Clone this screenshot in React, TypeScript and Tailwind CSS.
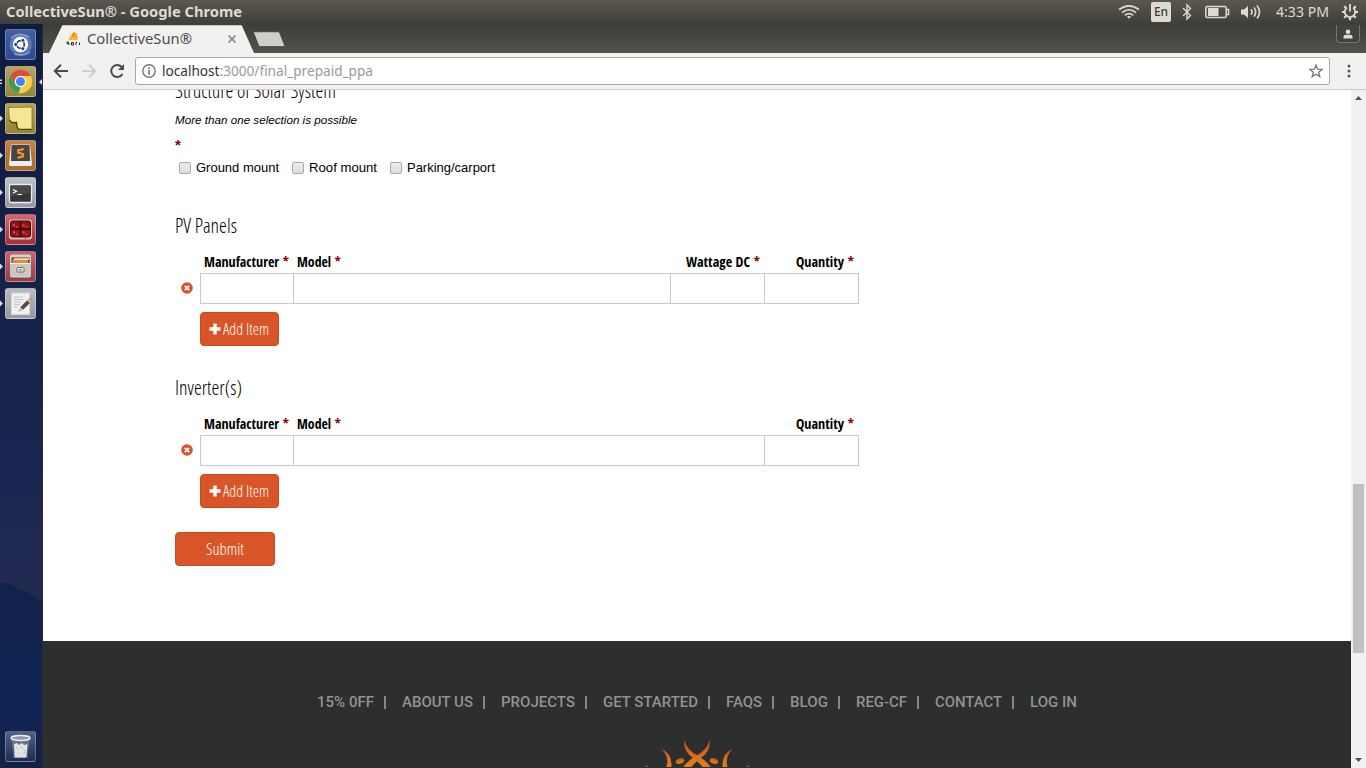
import { useLayoutEffect, useRef, useState, type ReactNode } from "react";

/* Text squeezed or stretched so that it fills the width of its own box. */
function Fit({ className, children }: { className: string; children: ReactNode }) {
  const box = useRef<HTMLSpanElement>(null);
  const inner = useRef<HTMLSpanElement>(null);
  const [k, setK] = useState(1);
  useLayoutEffect(() => {
    if (box.current && inner.current && inner.current.offsetWidth) {
      const range = document.createRange();
      range.selectNodeContents(inner.current);
      setK((prev) => (box.current!.clientWidth / range.getBoundingClientRect().width) * prev);
    }
  }, []);
  return (
    <span ref={box} className={"block shrink-0 whitespace-nowrap " + className}>
      <span ref={inner} className="inline-block origin-left" style={{ transform: `scaleX(${k})` }}>
        {children}
      </span>
    </span>
  );
}

const ui = "font-['Noto_Sans',sans-serif]";
const cond = "font-['Open_Sans_Condensed','Open_Sans',sans-serif] [font-stretch:75%]";
const condLight = "font-['Open_Sans_Condensed_Light','Open_Sans_Light','Open_Sans',sans-serif] font-light";

function Tray() {
  const c = "#dfdbd2";
  return (
    <div className="flex h-6 items-center">
      <svg width="22" height="16" viewBox="0 0 22 16" fill="none" stroke={c} strokeWidth="1.6">
        <path d="M1 5.7Q11-2 21 5.7M4 8.6Q11 3 18 8.6M6.8 11.4Q11 8 15.2 11.4" />
        <path d="M8.8 12.6Q11 11.2 13.2 12.6L11 14.8Z" fill={c} stroke="none" />
      </svg>
      <span className={`ml-[11px] flex h-5 w-5 items-center justify-center rounded-[2px] bg-[#dfdbd2] text-[12px] font-medium text-[#3c3b37] ${ui}`}>En</span>
      <svg className="ml-[11px]" width="10" height="18" viewBox="0 0 10 18" fill="none" stroke={c} strokeWidth="1.4">
        <path d="M1 5L8.5 12.5L5 16V2L8.5 5.5L1 13" />
      </svg>
      <svg className="ml-[13px]" width="25" height="14" viewBox="0 0 25 14" fill="none" stroke={c} strokeWidth="1.5">
        <rect x=".8" y="1.5" width="20.4" height="11" rx="1.5" />
        <path d="M22 4.5H23.6V9.5H22" />
        <rect x="3" y="3" width="10.500" height="8" fill={c} stroke="none" />
      </svg>
      <svg className="ml-[11px]" width="21" height="16" viewBox="0 0 21 16" fill="none" stroke={c} strokeWidth="1.6">
        <path d="M0 5.5H3L7 2V14L3 10.5H0Z" fill={c} stroke="none" />
        <path d="M10 5.3Q12 8 10 10.7M13 3.4Q16.3 8 13 12.6M16 1.4Q21 8 16 14.6" />
      </svg>
      <Fit className={`ml-[14px] w-[53px] text-[14px] leading-6 text-[#dfdbd2] ${ui}`}>4:33 PM</Fit>
      <svg className="ml-[12px] mr-[7px]" width="18" height="18" viewBox="0 0 18 18" fill="none" stroke={c}>
        <path d="M5.8 4.8A5.2 5.2 0 1 0 12.2 4.8" strokeWidth="1.8" />
        <path d="M9 1V8.5" strokeWidth="1.8" />
        <path d="M1 9H4M14 9H17M9 14V17.3M3.2 3.2L5.3 5.3M14.8 3.2L12.7 5.3M3.2 14.8L5.3 12.7M14.8 14.8L12.7 12.7" strokeWidth="2.2" />
      </svg>
    </div>
  );
}

function Tile({ className, mark, active, children }: { className: string; mark?: number; active?: boolean; children: ReactNode }) {
  return (
    <div className="flex h-[31px] w-[43px] shrink-0 items-center">
      <svg width="5" height="13" viewBox="0 0 5 13" fill="#d8dbe4">
        {mark === 1 && <path d="M0 3.5L3 6.5L0 9.5Z" />}
        {mark === 2 && <path d="M0 4.5h2v1.5h-2zM0 7.5h2v1.5h-2z" />}
      </svg>
      <div className={"h-[31px] w-[31px] overflow-hidden rounded-[3px] border border-white/25 " + className}>
        <svg width="29" height="29" viewBox="0 0 29 29">{children}</svg>
      </div>
      {active && (
        <svg className="ml-[3px]" width="3" height="6" viewBox="0 0 3 6" fill="#e4e4ea"><path d="M3 0V6L0 3Z" /></svg>
      )}
    </div>
  );
}

function Launcher() {
  return (
    <aside className="relative flex h-[744px] w-[43px] shrink-0 flex-col justify-between overflow-hidden border-r border-[#2b2936] bg-[linear-gradient(#0d1c40_0%,#142149_35%,#182550_60%,#222a52_74%,#24294e_80%)]">
      <svg className="absolute left-0 top-[555px]" width="43" height="189" viewBox="0 0 43 189">
        <defs>
          <linearGradient id="hill" x1="0" y1="0" x2="0" y2="1">
            <stop offset="0" stopColor="#11224b" />
            <stop offset=".75" stopColor="#102353" />
            <stop offset="1" stopColor="#172044" />
          </linearGradient>
        </defs>
        <path d="M0 3Q10 4 17 9Q32 14 43 24V189H0Z" fill="url(#hill)" />
      </svg>
      <div className="relative flex flex-col gap-[6px] pt-[5px]">
        <Tile className="bg-gradient-to-b from-[#4360a0] to-[#2b4896]">
          <path d="M4 18C2 7 11 2 20 5C26 8 28 16 23 22C17 28 8 26 4 18Z" fill="#8197c4" opacity=".55" />
          <path d="M5 8Q13 1 23 7M24 22Q18 27 8 24" stroke="#b3c0dc" strokeWidth="1.5" fill="none" opacity=".6" />
          <circle cx="14.5" cy="14.5" r="7.7" fill="#fff" />
          <circle cx="14.5" cy="14.5" r="3.8" fill="none" stroke="#25386f" strokeWidth="1.7" />
          <g fill="#25386f" stroke="#fff" strokeWidth=".8">
            <circle cx="9.7" cy="14.5" r="1.9" />
            <circle cx="16.9" cy="10.3" r="1.9" />
            <circle cx="16.9" cy="18.7" r="1.9" />
          </g>
        </Tile>
        <Tile className="bg-gradient-to-b from-[#b3a368] to-[#96873e]" mark={2} active>
          <circle cx="14.5" cy="14.5" r="11.7" fill="#f8cc46" />
          <path d="M4.4 8.6A11.7 11.7 0 0 1 24.7 8.9H14.5L9.4 17.3Z" fill="#df4b3b" />
          <path d="M4.4 8.6L9.4 17.4L14.5 20.2L12.6 26A11.7 11.7 0 0 1 4.4 8.6Z" fill="#3c9b57" />
          <circle cx="14.5" cy="14.5" r="5.8" fill="#f5f5f5" />
          <circle cx="14.5" cy="14.5" r="4.5" fill="#4583f0" />
        </Tile>
        <Tile className="bg-gradient-to-b from-[#b5a558] to-[#968535]" mark={1}>
          <path d="M2.500 3.500L26 3V25.500H13Q10.500 24 10.500 19.500Q5 20.500 3.500 16Z" fill="#f4e693" stroke="#7b6f2a" strokeWidth=".8" />
          <path d="M3.500 16Q5 19.500 10.500 18.500Q10.500 24 13 25.300H26" fill="none" stroke="#4b430f" strokeWidth="1.3" />
        </Tile>
        <Tile className="bg-gradient-to-b from-[#c18349] to-[#a96930]" mark={1}>
          <path d="M5 3.500H24L26 23.500Q26 25 24.500 25H4.500Q3 25 3 23.500Z" fill="#eeeeec" />
          <path d="M5.5 4H23.5L24 20H5Z" fill="#444546" />
          <path d="M17.800 8L12.200 9.500V11.600L17 13V15.300L11.500 16.800" fill="none" stroke="#f39429" strokeWidth="2.300" />
        </Tile>
        <Tile className="bg-gradient-to-b from-[#c0c1c5] to-[#96989e]" mark={1}>
          <rect x="3.5" y="6.5" width="22" height="18" rx="1.5" fill="#343636" stroke="#eeeeec" strokeWidth="1.3" />
          <path d="M5 8H24V15L5 18Z" fill="#606362" opacity=".45" />
          <path d="M7 11.5L10.5 13.2L7 15" fill="none" stroke="#fff" strokeWidth="1.2" />
          <path d="M11.5 16.5H16" stroke="#fff" />
        </Tile>
        <Tile className="bg-gradient-to-b from-[#d06a70] to-[#a92b32]" mark={1}>
          <rect x="3" y="4.5" width="23" height="20" rx="3" fill="#cac9c5" />
          <rect x="4.5" y="6" width="20" height="16" rx="2" fill="#9b1014" stroke="#3d0809" />
          <path d="M14.5 6.5V21.5M5 14H24" stroke="#2b0808" strokeWidth="1.3" />
          <path d="M7 9.5L9 10.3L7 11M16.5 9.5L18.5 10.3L16.5 11M7 16.5L9 17.3L7 18M16.5 16.5L18.5 17.3L16.5 18M10 12H12M19.5 12H21.5M10 19H12M19.5 19H21.5" fill="none" stroke="#ee7777" strokeWidth=".8" />
          <circle cx="19.5" cy="23.5" r=".8" fill="#ee3030" />
        </Tile>
        <Tile className="bg-gradient-to-b from-[#c4666e] to-[#933f48]" mark={1}>
          <rect x="4" y="2.5" width="21" height="23" rx="2" fill="#d5d3cf" />
          <path d="M5.5 5.5H23.5V11H5.5Z" fill="#5b3a27" />
          <path d="M6.5 7H22V11H6.5Z" fill="#ef8a3a" />
          <path d="M8 6.3H23V8H8Z" fill="#ffe0bd" />
          <path d="M4 11H25V24H4Z" fill="#c8c7c4" />
          <path d="M4 11.5H25" stroke="#f6f6f5" />
          <rect x="11" y="15.5" width="7" height="4.5" rx=".8" fill="#f5f5f4" stroke="#666" />
          <path d="M12.8 17.8H16.2" stroke="#555" />
        </Tile>
        <Tile className="bg-gradient-to-b from-[#b9bac0] to-[#9799a2]" mark={1}>
          <rect x="5.5" y="4" width="18" height="21.5" fill="#f0f0ef" stroke="#d6d6d6" />
          <path d="M8 8H17M8 10.5H18M8 13H15M8 15.5H14M8 18H12" stroke="#bcbcbc" strokeWidth=".9" />
          <path d="M12.5 22.5L14.5 18L22 10.5L24.7 13.2L17 20.8Z" fill="#4c4c4a" />
          <path d="M21 11.5L23.6 14.1L25 12.6L22.5 10Z" fill="#d9cf4e" />
          <path d="M22.5 10L24 8.7Q25.5 8 26.5 9.5Q27 10.5 26 11.5L25 12.6Z" fill="#c78ab8" />
          <path d="M12.5 22.5L14.5 18L17 20.8Z" fill="#e4c893" />
        </Tile>
      </div>
      <div className="relative pb-[6px]">
        <Tile className="bg-gradient-to-b from-[#6f7d9d]/70 to-[#1f3059]/80">
          <path d="M5.5 6.5H23.5L21.5 26H7.5Z" fill="#98a1b3" opacity=".45" />
          <path d="M8 12L11 11L13 13L16 11L18 13L21.5 12L20.3 25.5H8.7Z" fill="#e3e4e0" />
          <path d="M10 15L13 18M15 14L17 17M13 20L11 22M19 18L18 22" fill="none" stroke="#b9bab8" strokeWidth=".8" />
          <ellipse cx="14.5" cy="6" rx="9.5" ry="2.5" fill="#8e97a8" stroke="#eceeed" strokeWidth="1.4" />
        </Tile>
      </div>
    </aside>
  );
}

function TabStrip() {
  return (
    <div className="flex h-[29px] justify-between bg-gradient-to-b from-[#3d3c38] to-[#53524b]">
      <div className="flex">
        <div className="ml-[6px] flex h-[29px] w-[205px] items-center bg-[#f2f1f0] pl-[17px] [clip-path:polygon(6.5%_4%,94%_4%,100%_100%,0_100%)]">
          <svg width="15" height="15" viewBox="0 0 15 15">
            <path d="M8 0L9 2L11 2V4L12 6L11 8L12 9H3L1.500 9.500L4 7L3 6L5 5L4 3L6 4Z" fill="#f5b324" />
            <path d="M6 4L8 1L8.500 4L10 6L8.500 8L7 6L5 8L6 6Z" fill="#e57c20" />
            <path d="M7.500 4.500L9 7.500M5.500 6L7 8.500" stroke="#fbe87a" fill="none" />
            <path d="M3 11H1V12.5H3V14M5.500 11.500V14H7.500V11.500H5.500M10 14V11.500H11M13.500 11.500V14" fill="none" stroke="#111" strokeWidth=".9" />
          </svg>
          <Fit className={`ml-[6px] w-[105px] text-[14px] leading-6 text-[#4c4c4c] ${ui}`}>CollectiveSun®</Fit>
          <svg className="ml-[36px]" width="8" height="8" viewBox="0 0 8 8" stroke="#888" strokeWidth="1.6"><path d="M.5 .5L7.5 7.5M7.5 .5L.5 7.5" /></svg>
        </div>
        <svg className="-ml-[2px] mt-[7px]" width="34" height="17" viewBox="0 0 34 17">
          <path d="M1.500 1.5Q.500 .8 2 .8H25.5Q27 .8 27.8 2L33 15.6H8.5Q7.2 15.6 6.6 14.5Z" fill="#cfcecb" stroke="#393834" strokeWidth=".7" />
        </svg>
      </div>
      <div className="mr-[6px] mt-[1px] flex h-[18px] w-[24px] items-center justify-center rounded-b-[4px] border border-t-0 border-[#77766f] bg-[#42413c]">
        <svg width="10" height="10" viewBox="0 0 10 10" fill="#dedcd7"><circle cx="5" cy="2.7" r="2.3" /><path d="M.5 9.5V7.8Q.5 5.8 3 5.8H7Q9.5 5.8 9.5 7.8V9.5Z" /></svg>
      </div>
    </div>
  );
}

function Toolbar() {
  return (
    <div className="flex h-[37px] items-center border-b border-[#cdcbc9] bg-[#f2f1f0] pl-[10px]">
      <svg width="16" height="16" viewBox="0 0 16 16" fill="none" stroke="#4a4a4a" strokeWidth="2"><path d="M15 8H2M8 1.8L1.8 8L8 14.2" /></svg>
      <svg className="ml-[12px]" width="16" height="16" viewBox="0 0 16 16" fill="none" stroke="#cfcdcb" strokeWidth="2"><path d="M1 8H14M8 1.8L14.2 8L8 14.2" /></svg>
      <svg className="ml-[12px]" width="16" height="16" viewBox="0 0 16 16" fill="none" stroke="#4a4a4a" strokeWidth="2">
        <path d="M13.4 11A6 6 0 1 1 12.5 3.8L13.5 5" /><path d="M15 1V7H9Z" fill="#4a4a4a" stroke="none" />
      </svg>
      <div className="ml-[10px] flex h-7 w-[1195px] items-center rounded-[3px] border border-[#aaa8a6] bg-white">
        <svg className="ml-[6px]" width="14" height="14" viewBox="0 0 14 14" fill="none" stroke="#777" strokeWidth="1.4"><circle cx="7" cy="7" r="6.2" /><path d="M7 6V10.7M7 3.3V4.9" strokeWidth="1.7" /></svg>
        <Fit className={`ml-[6px] w-[211px] text-[14px] leading-6 text-[#9a9a9a] ${ui}`}><span className="text-[#333]">localhost</span>:3000/final_prepaid_ppa</Fit>
        <svg className="ml-auto mr-[6px]" width="14" height="14" viewBox="0 0 14 14" fill="none" stroke="#777" strokeWidth="1.3"><path d="M7 1.2L8.6 5.1L13 5.4L9.6 8.2L10.8 12.6L7 10.2L3.2 12.6L4.4 8.2L1 5.4L5.4 5.1Z" /></svg>
      </div>
      <svg className="ml-[17px]" width="4" height="14" viewBox="0 0 4 14" fill="#555"><circle cx="2" cy="2" r="1.5" /><circle cx="2" cy="7" r="1.5" /><circle cx="2" cy="12" r="1.5" /></svg>
    </div>
  );
}

function Heading({ className, children }: { className: string; children: ReactNode }) {
  return <h2><Fit className={`h-6 text-[20px] leading-[26px] text-black ${condLight} ${className}`}>{children}</Fit></h2>;
}

function Check({ label, className }: { label: string; className: string }) {
  return (
    <label className="flex items-center">
      <span className="h-3 w-3 rounded-[2px] border border-[#a9a9a9] bg-gradient-to-b from-[#ededed] to-[#dcdcdc]" />
      <Fit className={`ml-[5px] text-[13px] leading-4 text-black ${className}`}>{label}</Fit>
    </label>
  );
}

function Col({ name, className }: { name: string; className: string }) {
  return (
    <Fit className={`text-[14px] font-bold leading-5 text-black ${cond} ${className}`}>
      {name} <span className="text-[#8b0000]">*</span>
    </Fit>
  );
}

function ItemRow({ cells }: { cells: string[] }) {
  return (
    <div className="flex h-[31px] items-center pl-[6px]">
      <svg className="mb-px mr-[7px] shrink-0" width="12" height="12" viewBox="0 0 12 12">
        <circle cx="6" cy="6" r="5.8" fill="#d85427" />
        <path d="M3.9 3.9L8.1 8.1M8.1 3.9L3.9 8.1" stroke="#fff" strokeWidth="2" />
      </svg>
      <div className="flex h-[31px] border-y border-r border-[#c9c9c9]">
        {cells.map((w, i) => <div key={i} className={"border-l border-[#c9c9c9] bg-white " + w} />)}
      </div>
    </div>
  );
}

const btn = "flex h-[34px] items-center rounded-[4px] border border-[#c54b22] bg-[#d95427]";

function AddItem() {
  return (
    <button className={`ml-[25px] mt-2 w-[79px] pb-px pl-2 ${btn}`}>
      <svg width="12" height="12" viewBox="0 0 12 12" fill="#fff"><path d="M4.3 .5H7.7V4.3H11.5V7.7H7.7V11.5H4.3V7.7H.5V4.3H4.3Z" /></svg>
      <Fit className={`ml-[2px] w-[46px] text-left text-[16px] leading-6 text-white ${condLight}`}>Add Item</Fit>
    </button>
  );
}

const links: [string, string][] = [
  ["15% 0FF", "w-[57px]"], ["ABOUT US", "w-[71px]"], ["PROJECTS", "w-[74px]"], ["GET STARTED", "w-[95px]"],
  ["FAQS", "w-[36px]"], ["BLOG", "w-[38px]"], ["REG-CF", "w-[51px]"], ["CONTACT", "w-[67px]"], ["LOG IN", "w-[47px]"],
];

function Footer() {
  return (
    <footer className="h-[127px] overflow-hidden bg-[#2d2e2e] pl-[274px] pt-[51px]">
      <nav className="flex h-5 font-['Roboto',sans-serif] text-[15px] font-medium leading-5 text-[#929292]">
        {links.map(([t, w], i) => (
          <div key={t} className="flex items-center">
            <Fit className={w}>{t}</Fit>
            {i < links.length - 1 && <span className="ml-[10px] mr-[16px] h-[13px] w-[2px] bg-[#868686]" />}
          </div>
        ))}
      </nav>
      <svg className="ml-[327px] mt-[26px]" width="106" height="29" viewBox="-14 0 106 29">
        <defs><linearGradient id="sun" x1="0" y1="0" x2="0" y2="1"><stop offset="0" stopColor="#cf4d18" /><stop offset=".8" stopColor="#e07b1c" /></linearGradient></defs>
        <g fill="url(#sun)">
          <path d="M26.5 2Q24.5 12 35 20Q42 25 46 31L54 31Q50 24 42 19Q28 12 26.5 2Z" />
          <path d="M51.5 2Q53.5 12 43 20Q36 25 32 31L24 31Q28 24 36 19Q50 12 51.5 2Z" />
          <path d="M3.500 11Q14 15 13.500 29H8.500Q11.500 19 3.500 11Z" />
          <path d="M74.500 11Q64 15 64.500 29H69.500Q66.500 19 74.500 11Z" />
          <ellipse cx="22" cy="23" rx="4.300" ry="2.700" transform="rotate(-18 22 23)" />
          <ellipse cx="56" cy="23" rx="4.300" ry="2.700" transform="rotate(18 56 23)" />
          <path d="M-13 27L-10 29H-12ZM91 27L88 29H90Z" />
        </g>
      </svg>
    </footer>
  );
}

function Page() {
  return (
    <div className="flex h-[678px] w-[1308px] flex-col overflow-hidden bg-white font-['Liberation_Sans',Arial,sans-serif]">
      <main className="flex h-[551px] shrink-0 flex-col pl-[132px]">
        <div className="-mt-[12px]"><Heading className="w-[161px]">Structure of Solar System</Heading></div>
        <p className="mt-[10px]"><Fit className="w-[182px] text-[11.5px] italic leading-4 text-black">More than one selection is possible</Fit></p>
        <span className="mt-[8px] h-4 text-[15px] font-bold leading-[18px] text-[#8b0000]">*</span>
        <div className="mt-[8px] flex h-4 items-center pl-[4px]">
          <Check label="Ground mount" className="mr-[13px] w-[83px]" />
          <Check label="Roof mount" className="mr-[13px] w-[68px]" />
          <Check label="Parking/carport" className="w-[88px]" />
        </div>
        <div className="mt-[37px]"><Heading className="w-[62px]">PV Panels</Heading></div>
        <div className="mt-[15px] flex h-[21px] w-[684px] pl-[29px]">
          <Col name="Manufacturer" className="w-[85px]" />
          <Col name="Model" className="ml-[8px] w-[44px]" />
          <Col name="Wattage DC" className="ml-auto w-[74px]" />
          <Col name="Quantity" className="ml-[36px] mr-[5px] w-[58px]" />
        </div>
        <ItemRow cells={["w-[93px]", "w-[377px]", "w-[94px]", "w-[94px]"]} />
        <AddItem />
        <div className="mt-[29px]"><Heading className="w-[67px]">Inverter(s)</Heading></div>
        <div className="mt-[15px] flex h-[21px] w-[684px] pl-[29px]">
          <Col name="Manufacturer" className="w-[85px]" />
          <Col name="Model" className="ml-[8px] w-[44px]" />
          <Col name="Quantity" className="ml-auto mr-[5px] w-[58px]" />
        </div>
        <ItemRow cells={["w-[93px]", "w-[471px]", "w-[94px]"]} />
        <AddItem />
        <button className={`mt-[24px] w-[100px] justify-center ${btn}`}>
          <Fit className={`w-[38px] text-left text-[16px] leading-6 text-white ${condLight}`}>Submit</Fit>
        </button>
      </main>
      <Footer />
    </div>
  );
}

export default function App() {
  return (
    <div className="h-[768px] w-[1366px] overflow-hidden">
      <header className="flex h-6 justify-between bg-gradient-to-b from-[#5b584f] to-[#3f3e3a] pl-[6px]">
        <Fit className={`w-[236px] text-[14px] font-bold leading-6 text-[#dfdbd2] ${ui}`}>CollectiveSun® - Google Chrome</Fit>
        <Tray />
      </header>
      <div className="flex">
        <Launcher />
        <div className="w-[1323px]">
          <TabStrip />
          <Toolbar />
          <div className="flex">
            <Page />
            <div className="flex h-[678px] w-[15px] flex-col items-center bg-[#f1f1f1]">
              <svg className="mt-[6px]" width="7" height="4" viewBox="0 0 7 4" fill="#505050"><path d="M3.500 0L7 4H0Z" /></svg>
              <div className="mt-[384px] h-[169px] w-[11px] bg-[#c1c1c1]" />
              <svg className="mt-auto mb-[6px]" width="7" height="4" viewBox="0 0 7 4" fill="#505050"><path d="M3.500 4L7 0H0Z" /></svg>
            </div>
          </div>
        </div>
      </div>
    </div>
  );
}
